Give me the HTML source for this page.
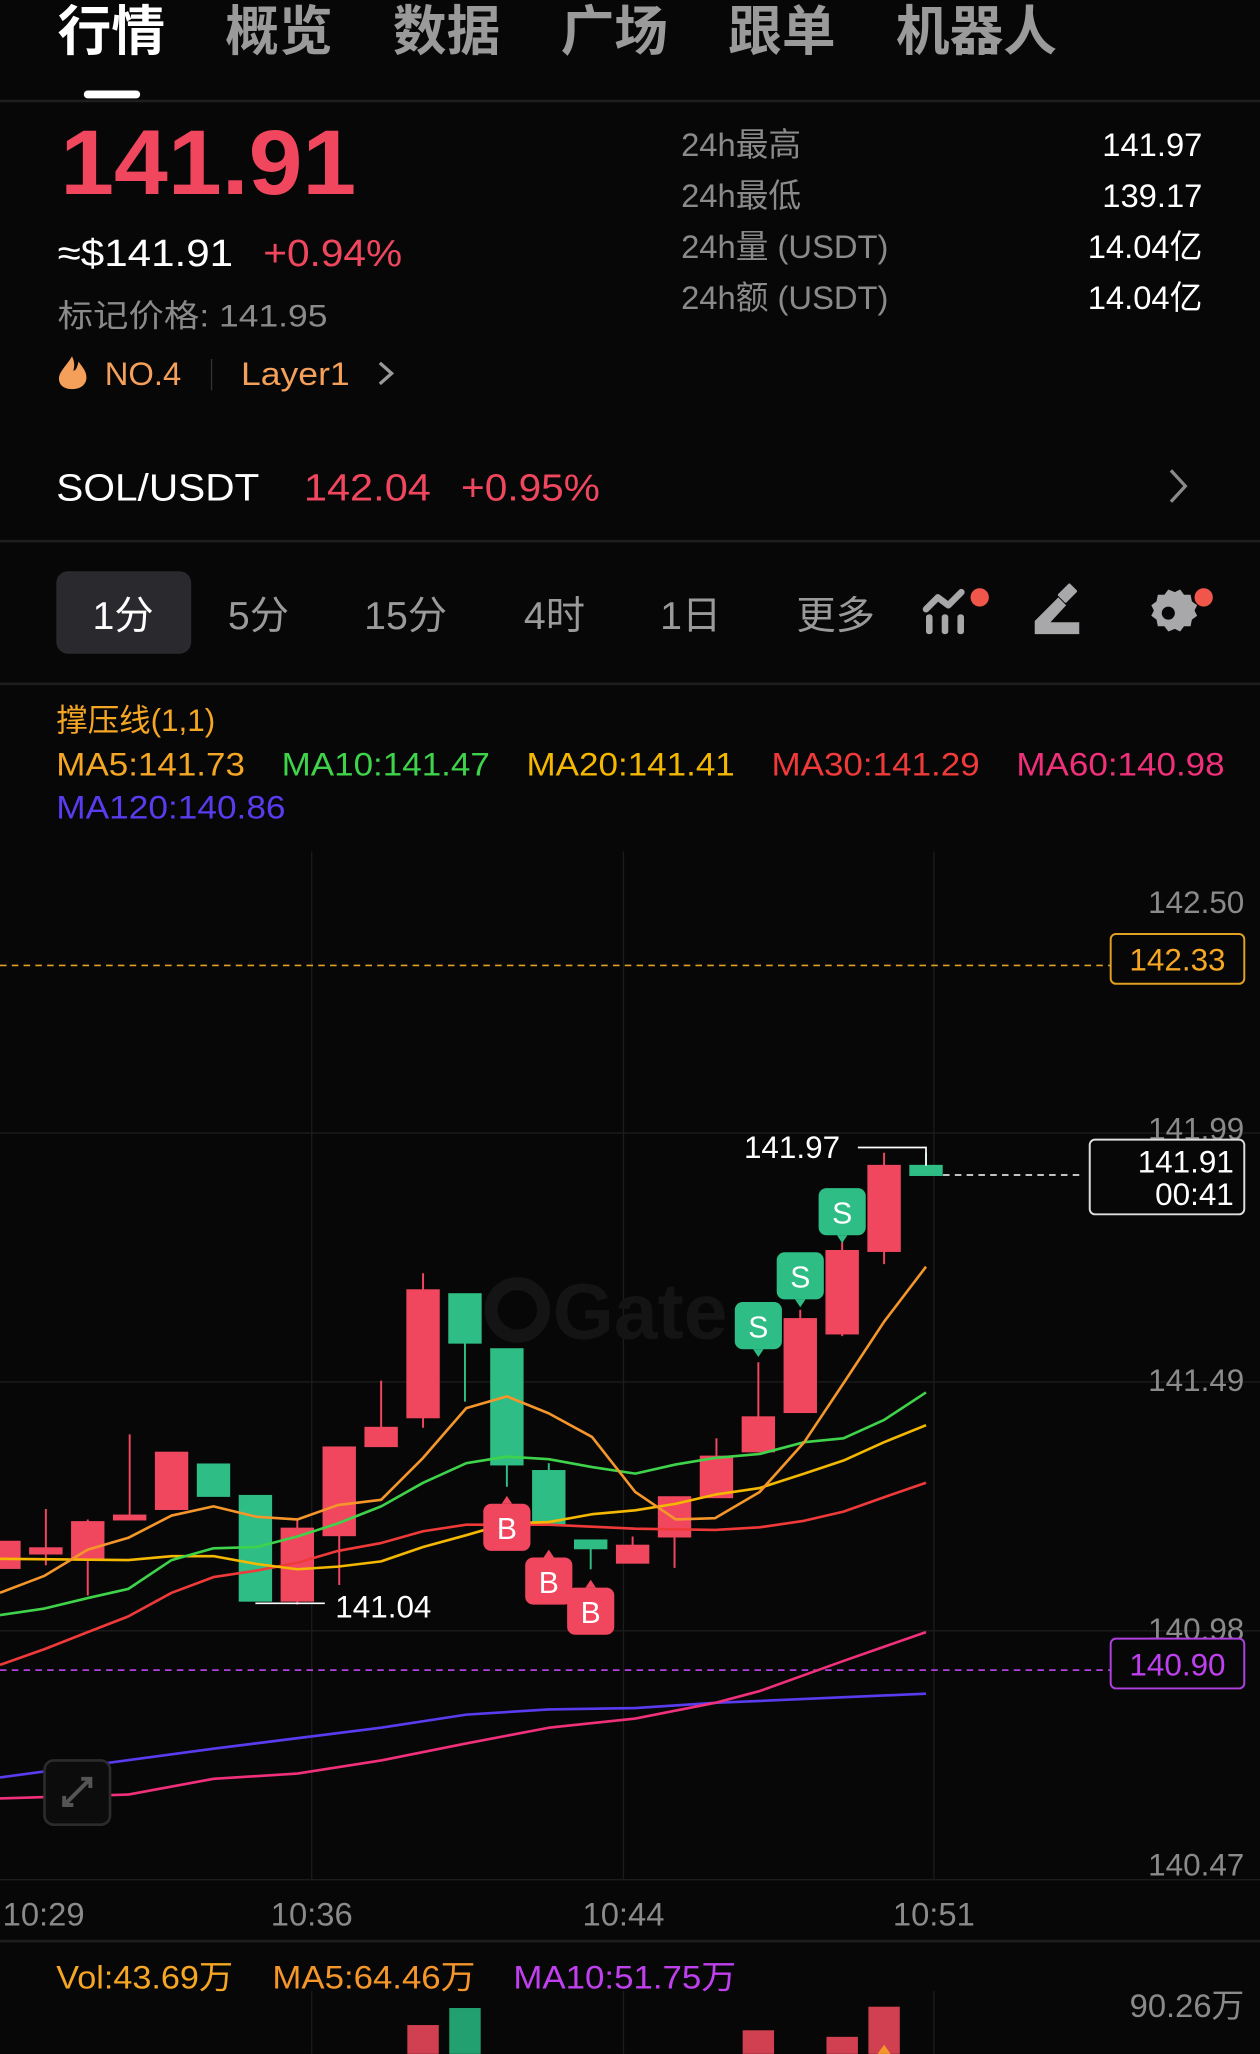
<!DOCTYPE html>
<html><head><meta charset="utf-8"><style>
html,body{margin:0;padding:0;background:#070707;}
svg{display:block;}
text{font-family:"Liberation Sans","Noto Sans CJK SC",sans-serif;}
</style></head><body>
<svg width="1260" height="2054" viewBox="0 0 962 1568" xmlns="http://www.w3.org/2000/svg">
<rect width="962" height="1568" fill="#070707"/>
<!-- tabs -->
<g font-size="41" font-weight="bold">
<text x="44" y="38" fill="#ffffff">行情</text>
<text x="172" y="38" fill="#9a9a9a">概览</text>
<text x="300" y="38" fill="#9a9a9a">数据</text>
<text x="428" y="38" fill="#9a9a9a">广场</text>
<text x="556" y="38" fill="#9a9a9a">跟单</text>
<text x="684" y="38" fill="#9a9a9a">机器人</text>
</g>
<rect x="64" y="69" width="43" height="6" rx="3" fill="#fff"/>
<rect x="0" y="76" width="962" height="2" fill="#1e1e1e"/>
<!-- price -->
<text x="46" y="148" fill="#f0475f" font-size="70" font-weight="bold" textLength="226" lengthAdjust="spacingAndGlyphs">141.91</text>
<text x="44" y="203" fill="#fff" font-size="29" textLength="134" lengthAdjust="spacingAndGlyphs">≈$141.91</text>
<text x="201" y="203" fill="#f0475f" font-size="29" textLength="106" lengthAdjust="spacingAndGlyphs">+0.94%</text>
<text x="44" y="249" fill="#8a8a8a" font-size="24" textLength="206" lengthAdjust="spacingAndGlyphs">标记价格: 141.95</text>
<path d="M55 272 C50 280 45 284 45 289 C45 294 49 297 55 297 C61 297 66 294 66 288 C66 283 62 279 60 276 C59 280 58 283 56 283 C57 279 57 276 55 272 Z" fill="#f5a05a"/>
<text x="80" y="294" fill="#f5a05a" font-size="25">NO.4</text>
<rect x="161" y="274" width="1" height="24" fill="#333"/>
<text x="184" y="294" fill="#f5a05a" font-size="25" textLength="83" lengthAdjust="spacingAndGlyphs">Layer1</text>
<path d="M290 277 L299 285 L290 293" stroke="#9a9a9a" stroke-width="2.5" fill="none"/>
<g font-size="25" fill="#8a8a8a">
<text x="520" y="119">24h最高</text>
<text x="520" y="158">24h最低</text>
<text x="520" y="197">24h量 (USDT)</text>
<text x="520" y="236">24h额 (USDT)</text>
</g>
<g font-size="25" fill="#fff" text-anchor="end">
<text x="918" y="119">141.97</text>
<text x="918" y="158">139.17</text>
<text x="918" y="197">14.04亿</text>
<text x="918" y="236">14.04亿</text>
</g>
<text x="43" y="382" fill="#fff" font-size="29" textLength="155" lengthAdjust="spacingAndGlyphs">SOL/USDT</text>
<text x="232" y="382" fill="#f0475f" font-size="29" textLength="97" lengthAdjust="spacingAndGlyphs">142.04</text>
<text x="352" y="382" fill="#f0475f" font-size="29" textLength="106" lengthAdjust="spacingAndGlyphs">+0.95%</text>
<path d="M894 359 L905 371 L894 383" stroke="#8a8a8a" stroke-width="2.5" fill="none"/>
<rect x="0" y="412" width="962" height="2" fill="#1e1e1e"/>
<!-- intervals -->
<rect x="43" y="436" width="103" height="63" rx="9" fill="#2a2a2e"/>
<g font-size="30" fill="#9a9a9a">
<text x="94" y="480" fill="#fff" text-anchor="middle">1分</text>
<text x="174" y="480">5分</text>
<text x="278" y="480">15分</text>
<text x="400" y="480">4时</text>
<text x="504" y="480">1日</text>
<text x="608" y="480">更多</text>
</g>
<g fill="#a8a8aa">
<rect x="707" y="469" width="5" height="15" rx="2"/><rect x="719" y="469" width="5" height="15" rx="2"/><rect x="731" y="469" width="5" height="15" rx="2"/>
<path d="M707 465 L716 456 L724 462 L734 452" stroke="#a8a8aa" stroke-width="5" fill="none" stroke-linecap="round" stroke-linejoin="round"/>
<path d="M790 484 L790 474 L808 456 L814 462 L802 475 L824 475 L824 484 Z"/>
<rect x="811" y="446" width="9" height="13" transform="rotate(45 815 452)" rx="1"/>
<path d="M892 450 l5 2 l4 -2 l3 4 l5 0 l1 5 l4 3 l-2 4 l2 4 l-4 3 l-1 5 l-5 0 l-3 4 l-4 -2 l-5 2 l-3 -4 l-5 0 l-1 -5 l-4 -3 l2 -4 l-2 -4 l4 -3 l1 -5 l5 0 z"/>
</g>
<circle cx="892" cy="468" r="5" fill="#070707"/>
<circle cx="748" cy="456" r="7" fill="#f0574a"/>
<circle cx="919" cy="456" r="7" fill="#f0574a"/>
<rect x="0" y="521" width="962" height="2" fill="#1e1e1e"/>
<!-- MA legend -->
<text x="43" y="558" fill="#f5a623" font-size="24">撑压线(1,1)</text>
<g font-size="25">
<text x="43" y="592" fill="#f5a623" textLength="144" lengthAdjust="spacingAndGlyphs">MA5:141.73</text>
<text x="215" y="592" fill="#3ed34a" textLength="159" lengthAdjust="spacingAndGlyphs">MA10:141.47</text>
<text x="402" y="592" fill="#f5b800" textLength="159" lengthAdjust="spacingAndGlyphs">MA20:141.41</text>
<text x="589" y="592" fill="#f03a3a" textLength="159" lengthAdjust="spacingAndGlyphs">MA30:141.29</text>
<text x="776" y="592" fill="#f0307a" textLength="159" lengthAdjust="spacingAndGlyphs">MA60:140.98</text>
<text x="43" y="625" fill="#5a3cf0" textLength="175" lengthAdjust="spacingAndGlyphs">MA120:140.86</text>
</g>
<!-- grid -->
<g stroke="#1c1c1c" stroke-width="1">
<line x1="0" y1="865" x2="962" y2="865"/><line x1="0" y1="1055" x2="962" y2="1055"/><line x1="0" y1="1245" x2="962" y2="1245"/><line x1="0" y1="1435" x2="962" y2="1435"/>
<line x1="238" y1="650" x2="238" y2="1435"/><line x1="476" y1="650" x2="476" y2="1435"/><line x1="713" y1="650" x2="713" y2="1435"/>
<line x1="238" y1="1520" x2="238" y2="1568"/><line x1="476" y1="1520" x2="476" y2="1568"/><line x1="713" y1="1520" x2="713" y2="1568"/>
</g>
<line x1="0" y1="1482" x2="962" y2="1482" stroke="#1e1e1e" stroke-width="2"/>
<g font-size="24" fill="#8a8a8a" text-anchor="end">
<text x="950" y="697">142.50</text>
<text x="950" y="870">141.99</text>
<text x="950" y="1062">141.49</text>
<text x="950" y="1252">140.98</text>
<text x="950" y="1432">140.47</text>
</g>
<!-- watermark -->
<circle cx="395" cy="1000" r="20" fill="none" stroke="#141414" stroke-width="10"/>
<text x="422" y="1022" fill="#141414" font-size="60" font-weight="bold">Gate</text>
<!-- dashed lines -->
<line x1="0" y1="737" x2="848" y2="737" stroke="#e0a020" stroke-width="1.3" stroke-dasharray="5 4"/>
<rect x="848" y="713" width="102" height="38" rx="4" fill="#070707" stroke="#e0a020" stroke-width="1.5"/>
<text x="899" y="741" fill="#f5a623" font-size="24" text-anchor="middle">142.33</text>
<line x1="0" y1="1275" x2="848" y2="1275" stroke="#b040e0" stroke-width="1.3" stroke-dasharray="5 4"/>
<rect x="848" y="1251" width="102" height="38" rx="4" fill="#070707" stroke="#b040e0" stroke-width="1.5"/>
<text x="899" y="1279" fill="#c040f0" font-size="24" text-anchor="middle">140.90</text>
<line x1="720" y1="897" x2="828" y2="897" stroke="#ddd" stroke-width="1.3" stroke-dasharray="5 4"/>
<rect x="832" y="870" width="118" height="57" rx="4" fill="#070707" stroke="#ddd" stroke-width="1.5"/>
<text x="942" y="895" fill="#fff" font-size="24" text-anchor="end">141.91</text>
<text x="942" y="920" fill="#fff" font-size="24" text-anchor="end">00:41</text>
<!-- candles -->
<g>
<g fill="#f0475f" stroke="#f0475f" stroke-width="1.5">
<rect x="0" y="1177" width="15" height="20"/>
<line x1="35" y1="1152" x2="35" y2="1195"/><rect x="23" y="1182" width="24" height="4"/>
<line x1="67" y1="1160" x2="67" y2="1218"/><rect x="55" y="1162" width="24" height="28"/>
<line x1="99" y1="1095" x2="99" y2="1160"/><rect x="87" y="1157" width="24" height="3"/>
<rect x="119" y="1109" width="24" height="43"/>
<line x1="227" y1="1160" x2="227" y2="1225"/><rect x="215" y="1167" width="24" height="55"/>
<line x1="259" y1="1105" x2="259" y2="1210"/><rect x="247" y="1105" width="24" height="67"/>
<line x1="291" y1="1054" x2="291" y2="1104"/><rect x="279" y="1090" width="24" height="14"/>
<line x1="323" y1="972" x2="323" y2="1090"/><rect x="311" y="985" width="24" height="97"/>
<line x1="483" y1="1173" x2="483" y2="1193"/><rect x="471" y="1180" width="24" height="13"/>
<line x1="515" y1="1143" x2="515" y2="1197"/><rect x="503" y="1143" width="24" height="30"/>
<line x1="547" y1="1098" x2="547" y2="1143"/><rect x="535" y="1112" width="24" height="31"/>
<line x1="579" y1="1040" x2="579" y2="1108"/><rect x="567" y="1082" width="24" height="26"/>
<line x1="611" y1="1000" x2="611" y2="1078"/><rect x="599" y="1007" width="24" height="71"/>
<line x1="643" y1="948" x2="643" y2="1020"/><rect x="631" y="955" width="24" height="63"/>
<line x1="675" y1="880" x2="675" y2="965"/><rect x="663" y="890" width="24" height="65"/>
</g>
<g fill="#2ebd85" stroke="#2ebd85" stroke-width="1.5">
<rect x="151" y="1118" width="24" height="24"/>
<rect x="183" y="1142" width="24" height="80"/>
<line x1="355" y1="988" x2="355" y2="1070"/><rect x="343" y="988" width="24" height="37"/>
<line x1="387" y1="1030" x2="387" y2="1135"/><rect x="375" y="1030" width="24" height="88"/>
<line x1="419" y1="1117" x2="419" y2="1163"/><rect x="407" y="1123" width="24" height="40"/>
<line x1="451" y1="1176" x2="451" y2="1198"/><rect x="439" y="1176" width="24" height="6"/>
<line x1="707" y1="880" x2="707" y2="897"/><rect x="695" y="890" width="24" height="7"/>
</g>
</g>
<!-- MA lines -->
<g fill="none" stroke-width="2" stroke-linejoin="round">
<polyline stroke="#5a3cf0" points="0,1357 163,1335 291,1319 356,1309 419,1305 485,1304 546,1300 707,1293"/>
<polyline stroke="#f0307a" points="0,1373 98,1370 163,1358 227,1354 291,1344 356,1331 419,1319 485,1312 546,1300 580,1291 644,1268 707,1246"/>
<polyline stroke="#f03a3a" points="0,1271 34,1259 67,1246 98,1234 131,1216 163,1204 196,1199 227,1193 258,1184 291,1178 323,1169 356,1164 419,1164 485,1167 546,1168 580,1166 614,1161 644,1154 675,1143 707,1132"/>
<polyline stroke="#f5b800" points="0,1190 98,1191 131,1188 163,1188 196,1194 227,1198 258,1196 291,1192 323,1181 356,1172 387,1163 419,1162 452,1156 485,1153 516,1148 546,1141 580,1136 614,1125 644,1115 675,1101 707,1088"/>
<polyline stroke="#3ed34a" points="0,1233 34,1228 67,1220 98,1213 131,1191 163,1182 196,1181 227,1173 258,1163 291,1150 323,1132 356,1117 387,1112 419,1114 452,1120 485,1125 516,1118 546,1113 580,1110 614,1101 644,1098 675,1084 707,1063"/>
<polyline stroke="#f5962a" points="0,1216 34,1203 67,1183 98,1174 131,1157 163,1150 196,1158 227,1160 258,1149 291,1145 323,1113 356,1075 387,1066 419,1079 452,1097 485,1139 516,1160 546,1159 580,1139 614,1101 644,1056 675,1009 707,967"/>
</g>
<!-- high/low labels -->
<path d="M655 876 L707 876 L707 890" stroke="#fff" stroke-width="1.3" fill="none"/>
<text x="568" y="884" fill="#fff" font-size="24">141.97</text>
<line x1="195" y1="1224" x2="248" y2="1224" stroke="#fff" stroke-width="1.3"/>
<text x="256" y="1235" fill="#fff" font-size="24">141.04</text>
<!-- B/S markers -->
<g font-size="23" fill="#fff" text-anchor="middle">
<rect x="369" y="1148" width="36" height="36" rx="6" fill="#f0475f"/><path d="M383 1148 l4 -6 l4 6z" fill="#f0475f"/><text x="387" y="1175">B</text>
<rect x="401" y="1189" width="36" height="36" rx="6" fill="#f0475f"/><path d="M415 1189 l4 -6 l4 6z" fill="#f0475f"/><text x="419" y="1216">B</text>
<rect x="433" y="1212" width="36" height="36" rx="6" fill="#f0475f"/><path d="M447 1212 l4 -6 l4 6z" fill="#f0475f"/><text x="451" y="1239">B</text>
<rect x="561" y="994" width="36" height="36" rx="6" fill="#2ebd85"/><path d="M575 1030 l4 6 l4 -6z" fill="#2ebd85"/><text x="579" y="1021">S</text>
<rect x="593" y="956" width="36" height="36" rx="6" fill="#2ebd85"/><path d="M607 992 l4 6 l4 -6z" fill="#2ebd85"/><text x="611" y="983">S</text>
<rect x="625" y="907" width="36" height="36" rx="6" fill="#2ebd85"/><path d="M639 943 l4 6 l4 -6z" fill="#2ebd85"/><text x="643" y="934">S</text>
</g>
<!-- expand button -->
<rect x="34" y="1344" width="50" height="49" rx="7" fill="#0c0c0c" stroke="#2c2c2c" stroke-width="2"/>
<path d="M50 1377 L68 1359 M62 1358 L69 1358 L69 1365 M49 1371 L49 1378 L56 1378" stroke="#555" stroke-width="3" fill="none"/>
<!-- time labels -->
<g font-size="25" fill="#8a8a8a">
<text x="2" y="1470">10:29</text>
<text x="238" y="1470" text-anchor="middle">10:36</text>
<text x="476" y="1470" text-anchor="middle">10:44</text>
<text x="713" y="1470" text-anchor="middle">10:51</text>
</g>
<!-- volume -->
<g font-size="25">
<text x="43" y="1518" fill="#f5a623" textLength="135" lengthAdjust="spacingAndGlyphs">Vol:43.69万</text>
<text x="208" y="1518" fill="#f5962a" textLength="155" lengthAdjust="spacingAndGlyphs">MA5:64.46万</text>
<text x="392" y="1518" fill="#c040f0" textLength="170" lengthAdjust="spacingAndGlyphs">MA10:51.75万</text>
<text x="950" y="1540" fill="#8a8a8a" text-anchor="end">90.26万</text>
</g>
<rect x="311" y="1546" width="24" height="22" fill="#d04050"/>
<rect x="343" y="1533" width="24" height="35" fill="#22a070"/>
<rect x="567" y="1550" width="24" height="18" fill="#d04050"/>
<rect x="631" y="1555" width="24" height="13" fill="#d04050"/>
<rect x="663" y="1532" width="24" height="36" fill="#d04050"/>
<path d="M670 1568 L675 1561 L680 1568 Z" fill="#f5962a"/>
</svg>
</body></html>
